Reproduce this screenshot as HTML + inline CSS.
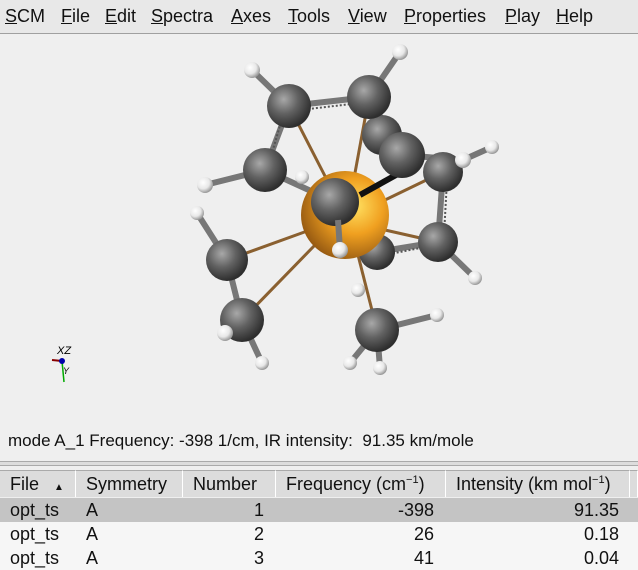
<!DOCTYPE html>
<html><head><meta charset="utf-8"><style>
body{margin:0;width:638px;height:569px;background:#efefef;font-family:"Liberation Sans",sans-serif;position:relative;overflow:hidden}
.menu{position:absolute;left:0;top:0;width:638px;height:33px;background:#e8e8e8;border-bottom:1px solid #a0a0a0}
.menu span{position:absolute;top:6px;font-size:18px;color:#111}
.menu u{text-decoration:underline}
.status{position:absolute;left:8px;top:431px;font-size:17px;color:#111;white-space:pre}
.split{position:absolute;left:0;top:461px;width:638px;height:3px;border-top:1px solid #aaa;border-bottom:1px solid #aaa;background:#ddd}
.tbl{position:absolute;left:0;top:470px;width:638px}
.hdr{position:absolute;top:0;height:27px;background:#dcdcdc;border-right:1px solid #fff;border-top:1px solid #aaa;font-size:18px;line-height:27px;color:#111;box-sizing:border-box;padding-left:10px;white-space:nowrap;overflow:hidden}
.row{position:absolute;left:0;width:638px;height:24px;font-size:18px;line-height:24px;color:#111}
.c{position:absolute;top:0}
.r{text-align:right}
sup{font-size:11px;vertical-align:baseline;position:relative;top:-7px;line-height:0}
</style></head><body>
<div class="menu">
<span style="left:5px"><u>S</u>CM</span>
<span style="left:61px"><u>F</u>ile</span>
<span style="left:105px"><u>E</u>dit</span>
<span style="left:151px"><u>S</u>pectra</span>
<span style="left:231px"><u>A</u>xes</span>
<span style="left:288px"><u>T</u>ools</span>
<span style="left:348px"><u>V</u>iew</span>
<span style="left:404px"><u>P</u>roperties</span>
<span style="left:505px"><u>P</u>lay</span>
<span style="left:556px"><u>H</u>elp</span>
</div>
<svg style="position:absolute;left:0;top:34px" width="638" height="390" viewBox="0 34 638 390">
<defs>
<radialGradient id="c" cx="0.38" cy="0.35" r="0.65"><stop offset="0" stop-color="#a8a8a8"/><stop offset="0.5" stop-color="#626262"/><stop offset="1" stop-color="#2e2e2e"/></radialGradient>
<radialGradient id="h" cx="0.38" cy="0.35" r="0.65"><stop offset="0" stop-color="#fff"/><stop offset="0.6" stop-color="#e8e8e8"/><stop offset="1" stop-color="#9a9a9a"/></radialGradient>
<radialGradient id="fe" cx="0.62" cy="0.4" r="0.7"><stop offset="0" stop-color="#ffe060"/><stop offset="0.45" stop-color="#f0a020"/><stop offset="1" stop-color="#8a5010"/></radialGradient>
</defs>
<g stroke="#777" stroke-width="6" stroke-linecap="round">
<line x1="252" y1="70" x2="289" y2="106"/><line x1="400" y1="52" x2="369" y2="97"/>
<line x1="289" y1="106" x2="369" y2="97"/><line x1="289" y1="106" x2="265" y2="170"/>
<line x1="369" y1="97" x2="402" y2="155"/><line x1="402" y1="155" x2="463" y2="160"/>
<line x1="463" y1="160" x2="492" y2="147"/><line x1="443" y1="172" x2="438" y2="242"/>
<line x1="438" y1="242" x2="377" y2="252"/><line x1="438" y1="242" x2="475" y2="278"/>
<line x1="205" y1="185" x2="265" y2="170"/><line x1="265" y1="170" x2="335" y2="202"/>
<line x1="197" y1="213" x2="227" y2="260"/><line x1="227" y1="260" x2="242" y2="320"/>
<line x1="242" y1="320" x2="262" y2="363"/><line x1="377" y1="330" x2="437" y2="315"/>
<line x1="377" y1="330" x2="350" y2="363"/><line x1="377" y1="330" x2="380" y2="368"/>
</g>
<g stroke="#555" stroke-width="2" stroke-dasharray="2 2">
<line x1="300" y1="110" x2="360" y2="103"/><line x1="283" y1="115" x2="270" y2="160"/>
<line x1="447" y1="180" x2="444" y2="235"/><line x1="430" y1="246" x2="385" y2="255"/>
</g>
<g stroke="#8a6030" stroke-width="3">
<line x1="289" y1="106" x2="345" y2="215"/><line x1="369" y1="97" x2="350" y2="200"/>
<line x1="227" y1="260" x2="310" y2="230"/><line x1="242" y1="320" x2="315" y2="245"/>
<line x1="377" y1="330" x2="358" y2="255"/><line x1="443" y1="172" x2="385" y2="200"/>
<line x1="438" y1="242" x2="385" y2="230"/>
</g>
<circle cx="382" cy="135" r="20" fill="url(#c)"/>
<circle cx="377" cy="252" r="18" fill="url(#c)"/>
<circle cx="358" cy="290" r="7" fill="url(#h)"/>
<circle cx="302" cy="177" r="7" fill="url(#h)"/>
<circle cx="345" cy="215" r="44" fill="url(#fe)"/>
<circle cx="289" cy="106" r="22" fill="url(#c)"/>
<circle cx="369" cy="97" r="22" fill="url(#c)"/>
<line x1="360" y1="195" x2="405" y2="170" stroke="#111" stroke-width="6"/>
<circle cx="402" cy="155" r="23" fill="url(#c)"/>
<circle cx="443" cy="172" r="20" fill="url(#c)"/>
<circle cx="265" cy="170" r="22" fill="url(#c)"/>
<circle cx="335" cy="202" r="24" fill="url(#c)"/>
<line x1="338" y1="220" x2="340" y2="250" stroke="#777" stroke-width="6"/>
<circle cx="438" cy="242" r="20" fill="url(#c)"/>
<circle cx="227" cy="260" r="21" fill="url(#c)"/>
<circle cx="242" cy="320" r="22" fill="url(#c)"/>
<circle cx="377" cy="330" r="22" fill="url(#c)"/>
<g fill="url(#h)">
<circle cx="252" cy="70" r="8"/><circle cx="400" cy="52" r="8"/><circle cx="492" cy="147" r="7"/>
<circle cx="463" cy="160" r="8"/><circle cx="205" cy="185" r="8"/><circle cx="197" cy="213" r="7"/>
<circle cx="340" cy="250" r="8"/><circle cx="475" cy="278" r="7"/><circle cx="225" cy="333" r="8"/>
<circle cx="262" cy="363" r="7"/><circle cx="437" cy="315" r="7"/><circle cx="350" cy="363" r="7"/>
<circle cx="380" cy="368" r="7"/>
</g>
<line x1="52" y1="360" x2="62" y2="361" stroke="#800" stroke-width="2"/>
<line x1="62" y1="361" x2="64" y2="382" stroke="#0a0" stroke-width="1.5"/>
<circle cx="62" cy="361" r="3" fill="#00a"/>
<text x="57" y="354" font-size="11" font-style="italic" font-family="Liberation Sans">XZ</text>
<text x="63" y="374" font-size="9" font-style="italic" font-family="Liberation Sans">Y</text>
</svg>
<div class="status">mode A_1 Frequency: -398 1/cm, IR intensity:  91.35 km/mole</div>
<div class="split"></div>
<div class="tbl">
<div class="hdr" style="left:0;width:76px">File <span style="font-size:10px;margin-left:10px">▲</span></div>
<div class="hdr" style="left:76px;width:107px">Symmetry</div>
<div class="hdr" style="left:183px;width:93px">Number</div>
<div class="hdr" style="left:276px;width:170px">Frequency (cm<sup>−1</sup>)</div>
<div class="hdr" style="left:446px;width:184px">Intensity (km mol<sup>−1</sup>)</div>
<div class="hdr" style="left:630px;width:8px;padding:0"></div>
<div class="row" style="top:28px;background:#c4c4c4"><span class="c" style="left:10px">opt_ts</span><span class="c" style="left:86px">A</span><span class="c r" style="left:183px;width:81px">1</span><span class="c r" style="left:276px;width:158px">-398</span><span class="c r" style="left:446px;width:173px">91.35</span></div>
<div class="row" style="top:52px;background:#f6f6f6"><span class="c" style="left:10px">opt_ts</span><span class="c" style="left:86px">A</span><span class="c r" style="left:183px;width:81px">2</span><span class="c r" style="left:276px;width:158px">26</span><span class="c r" style="left:446px;width:173px">0.18</span></div>
<div class="row" style="top:76px;background:#f6f6f6"><span class="c" style="left:10px">opt_ts</span><span class="c" style="left:86px">A</span><span class="c r" style="left:183px;width:81px">3</span><span class="c r" style="left:276px;width:158px">41</span><span class="c r" style="left:446px;width:173px">0.04</span></div>
</div>
</body></html>
